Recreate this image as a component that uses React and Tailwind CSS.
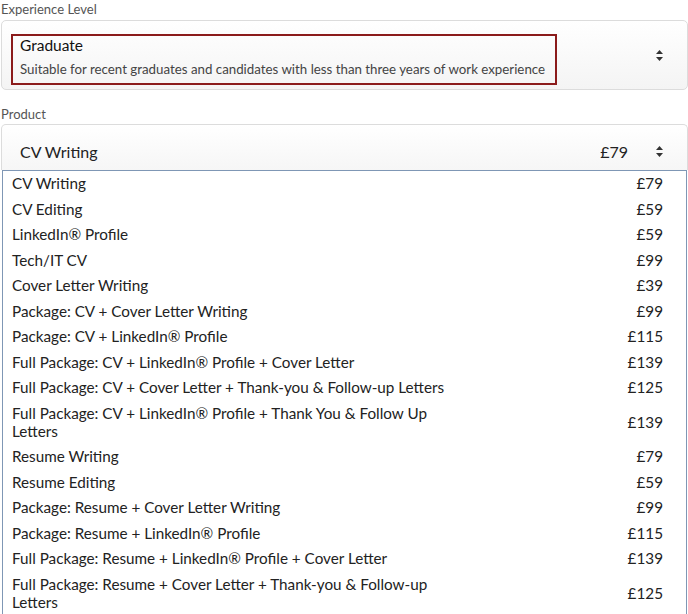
import { useState } from "react";

const products = [
  ["CV Writing", "£79"],
  ["CV Editing", "£59"],
  ["LinkedIn® Profile", "£59"],
  ["Tech/IT CV", "£99"],
  ["Cover Letter Writing", "£39"],
  ["Package: CV + Cover Letter Writing", "£99"],
  ["Package: CV + LinkedIn® Profile", "£115"],
  ["Full Package: CV + LinkedIn® Profile + Cover Letter", "£139"],
  ["Full Package: CV + Cover Letter + Thank-you & Follow-up Letters", "£125"],
  ["Full Package: CV + LinkedIn® Profile + Thank You & Follow Up Letters", "£139"],
  ["Resume Writing", "£79"],
  ["Resume Editing", "£59"],
  ["Package: Resume + Cover Letter Writing", "£99"],
  ["Package: Resume + LinkedIn® Profile", "£115"],
  ["Full Package: Resume + LinkedIn® Profile + Cover Letter", "£139"],
  ["Full Package: Resume + Cover Letter + Thank-you & Follow-up Letters", "£125"],
];

function Arrows() {
  return (
    <svg width="9" height="13" viewBox="0 0 9 13" className="shrink-0">
      <path d="M4.5 1 L8 5 L1 5 Z" fill="#333" />
      <path d="M4.5 12 L8 8 L1 8 Z" fill="#333" />
    </svg>
  );
}

export default function App() {
  const [selected, setSelected] = useState(0);

  return (
    <div className="w-[688px] h-[614px] overflow-hidden bg-white font-['Lato','Noto_Sans',sans-serif] text-[#222]">
      <div className="pl-[1px]">
        <p className="text-[13px] leading-[18px] text-[#555]">Experience Level</p>
        <div className="mt-[2px] h-[70px] rounded-[5px] border border-[#dcdcdc] bg-gradient-to-b from-white to-[#f4f4f4] flex items-start pl-[9px] pt-[13px] pr-[23px]">
          <div className="w-fit border-2 border-[#8b1b1b] pl-[7px] pr-[10px] pb-[5px]">
            <p className="text-[15.5px] leading-[18px] text-[#111]">Graduate</p>
            <p className="mt-[6px] text-[13.3px] leading-[18px] text-[#444]">
              Suitable for recent graduates and candidates with less than three years of work experience
            </p>
          </div>
          <div className="ml-auto mt-[15px]">
            <Arrows />
          </div>
        </div>

        <p className="mt-[15px] text-[13px] leading-[18px] text-[#555]">Product</p>
        <div className="mt-[1px] h-[46px] rounded-t-[5px] border border-b-0 border-[#dcdcdc] bg-gradient-to-b from-white to-[#f6f6f6] flex items-center pl-[18px] pr-[23px] pt-[8px]">
          <span className="text-[16px] leading-[20px]">{products[selected][0]}</span>
          <span className="ml-auto mr-[27px] text-[16px] leading-[20px]">{products[selected][1]}</span>
          <Arrows />
        </div>
      </div>

      <ul className="ml-[2px] w-[685px] border border-[#7f97b5] bg-white">
        {products.map(([name, price], i) => (
          <li
            key={name}
            onClick={() => setSelected(i)}
            className="flex items-center pl-[9px] pr-[23px] pt-[3.25px] pb-[4.25px] text-[15.25px] leading-[18px] cursor-pointer"
          >
            <span className="w-[450px]">{name}</span>
            <span className="ml-auto">{price}</span>
          </li>
        ))}
      </ul>
    </div>
  );
}
